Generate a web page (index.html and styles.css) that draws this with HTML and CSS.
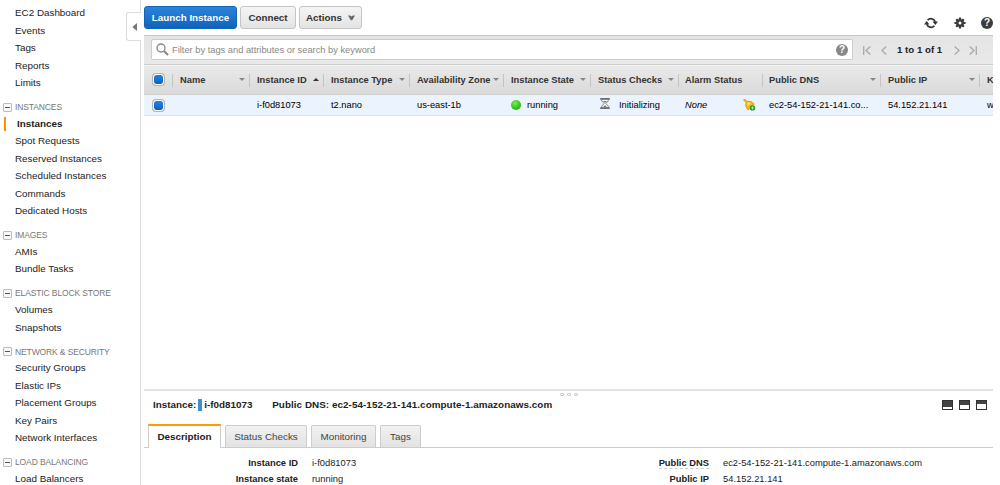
FILE: index.html
```html
<!DOCTYPE html>
<html lang="en">
<head>
<meta charset="utf-8">
<title>EC2 Management Console</title>
<link rel="stylesheet" href="styles.css">
</head>
<body>
<div class="app">
  <nav class="sidebar">
    <ul class="nav-list">
      <li>EC2 Dashboard</li><li>Events</li><li>Tags</li><li>Reports</li><li>Limits</li>
    </ul>
    <h2 class="nav-head"><i class="minus"></i>INSTANCES</h2>
    <ul class="nav-list">
      <li class="current">Instances</li><li>Spot Requests</li><li>Reserved Instances</li><li>Scheduled Instances</li><li>Commands</li><li>Dedicated Hosts</li>
    </ul>
    <h2 class="nav-head"><i class="minus"></i>IMAGES</h2>
    <ul class="nav-list"><li>AMIs</li><li>Bundle Tasks</li></ul>
    <h2 class="nav-head"><i class="minus"></i>ELASTIC BLOCK STORE</h2>
    <ul class="nav-list"><li>Volumes</li><li>Snapshots</li></ul>
    <h2 class="nav-head"><i class="minus"></i>NETWORK &amp; SECURITY</h2>
    <ul class="nav-list"><li>Security Groups</li><li>Elastic IPs</li><li>Placement Groups</li><li>Key Pairs</li><li>Network Interfaces</li></ul>
    <h2 class="nav-head"><i class="minus"></i>LOAD BALANCING</h2>
    <ul class="nav-list"><li>Load Balancers</li></ul>
    <div class="collapse"><svg width="5" height="8" viewBox="0 0 5 8"><path d="M5 0V8L.3 4Z" fill="#777"/></svg></div>
  </nav>
  <main class="main">
    <header class="toolbar">
      <button class="btn primary">Launch Instance</button>
      <button class="btn connect">Connect</button>
      <button class="btn actions">Actions <svg width="7" height="6" viewBox="0 0 7 6"><path d="M0 .5H2L3.5 1.4L5 .5H7L4.2 5.2H2.8Z" fill="#666"/></svg></button>
      <div class="tools">
        <svg width="14" height="12" viewBox="0 0 14 12"><g fill="none" stroke="#333" stroke-width="1.7"><path d="M3.6 3.2A4.6 4.6 0 0 1 11.3 4.8"/><path d="M10.4 8.8A4.6 4.6 0 0 1 2.7 7.2"/></g><path d="M8.6 4.6H14L11.3 8ZM0 7.4H5.4L2.7 4Z" fill="#333"/></svg>
        <svg width="12" height="12" viewBox="-6 -6 12 12"><g stroke="#3c3c3c" stroke-width="2.2"><path d="M0-5.5V5.5M-5.5 0H5.5M-3.8-3.8L3.8 3.8M-3.8 3.8L3.8-3.8"/></g><circle r="4" fill="#3c3c3c"/><circle r="1.5" fill="#fff"/></svg>
        <span class="help dark">?</span>
      </div>
    </header>
    <section class="filter">
      <div class="search">
        <svg width="13" height="13" viewBox="0 0 13 13"><circle cx="5" cy="5" r="4" fill="none" stroke="#888" stroke-width="1.4"/><path d="M8 8L12 12" stroke="#888" stroke-width="2.2"/></svg>
        <span class="hint">Filter by tags and attributes or search by keyword</span>
        <span class="help">?</span>
      </div>
      <div class="pager">
        <svg width="8" height="9" viewBox="0 0 8 9"><path d="M.7 0V9M7.3.5L3 4.5L7.3 8.5"/></svg>
        <svg width="6" height="9" viewBox="0 0 6 9"><path d="M5.3.5L1 4.5L5.3 8.5"/></svg>
        <b>1 to 1 of 1</b>
        <svg width="6" height="9" viewBox="0 0 6 9"><path d="M.7.5L5 4.5L.7 8.5"/></svg>
        <svg width="8" height="9" viewBox="0 0 8 9"><path d="M7.3 0V9M.7.5L5 4.5L.7 8.5"/></svg>
      </div>
    </section>
    <section class="grid head">
      <div class="check"><i class="box"></i></div>
      <div>Name<i class="sort"></i></div>
      <div>Instance ID<i class="sort up"></i></div>
      <div>Instance Type<i class="sort"></i></div>
      <div>Availability Zone<i class="sort"></i></div>
      <div>Instance State<i class="sort"></i></div>
      <div>Status Checks<i class="sort"></i></div>
      <div>Alarm Status</div>
      <div>Public DNS<i class="sort"></i></div>
      <div>Public IP<i class="sort"></i></div>
      <div>K</div>
    </section>
    <section class="grid row">
      <div class="check"><i class="box"></i></div>
      <div></div>
      <div>i-f0d81073</div>
      <div>t2.nano</div>
      <div>us-east-1b</div>
      <div><i class="dot"></i>running</div>
      <div><svg class="glass" width="10" height="11" viewBox="0 0 10 11"><path d="M1.8 1V3L4.2 5.5L1.8 8V10H8.2V8L5.8 5.5L8.2 3V1Z" fill="#fff" stroke="#777" stroke-width=".9"/><path d="M0 .8H10M0 10.2H10" stroke="#555" stroke-width="1.3"/><path d="M3 3H7L5 5ZM2.7 9.5L5 7L7.3 9.5Z" fill="#777"/></svg>Initializing</div>
      <div><em>None</em><svg class="bell" width="13" height="12" viewBox="0 0 13 12"><path d="M.4.8L2 .2L4 2.3Q8.5 1.3 11.3 5.2L5 11Q1.8 7.8 3 3.6Z" fill="#f7b917" stroke="#d98a0a" stroke-width=".7"/><path d="M4 4Q6 2.7 8 4L4.8 7.2Z" fill="#ffdf62"/><circle cx="9.5" cy="8.9" r="2.7" fill="#239728"/><path d="M9.5 7.4V10.4M8 8.9H11" stroke="#bff0b4" stroke-width=".9"/></svg></div>
      <div>ec2-54-152-21-141.co...</div>
      <div>54.152.21.141</div>
      <div>w</div>
    </section>
    <div class="space"></div>
    <section class="details">
      <div class="grip"><i></i><i></i><i></i></div>
      <div class="title">
        <b class="label">Instance:</b><i class="bar"></i><b class="id">i-f0d81073</b><b class="dns">Public DNS: ec2-54-152-21-141.compute-1.amazonaws.com</b>
        <div class="layouts"><i class="full"></i><i class="half"></i><i class="low"></i></div>
      </div>
      <div class="tabs">
        <div class="tab active">Description</div><div class="tab t2">Status Checks</div><div class="tab t3">Monitoring</div><div class="tab t4">Tags</div>
      </div>
      <dl class="facts">
        <dt>Instance ID</dt><dd>i-f0d81073</dd><dt><span class="tip">Public DNS</span></dt><dd>ec2-54-152-21-141.compute-1.amazonaws.com</dd>
        <dt>Instance state</dt><dd>running</dd><dt>Public IP</dt><dd>54.152.21.141</dd>
      </dl>
    </section>
  </main>
</div>
</body>
</html>
```
FILE: styles.css
```css
* { box-sizing: border-box; }
html, body { margin: 0; height: 485px; overflow: hidden; background: #fff; }
body { font: 9.85px/12px "Liberation Sans", Arial, sans-serif; color: #222; }
ul, h2, dl, dd { margin: 0; padding: 0; }
svg, i { display: block; flex: none; }
.app { display: flex; width: 993px; height: 485px; overflow: hidden; }

.sidebar { position: relative; flex: none; width: 141px; height: 485px; padding-top: 4px; border-right: 1px solid #ddd; }
.nav-list { list-style: none; }
.nav-list li { height: 17.5px; padding-left: 15px; line-height: 17.5px; white-space: nowrap; }
.nav-list .current { padding-left: 17px; font-weight: bold; background: linear-gradient(#f90, #f80) 4px 2px / 2px 14px no-repeat; }
.nav-head { display: flex; align-items: center; height: 23.2px; padding: 8px 0 0 3px; font-size: 8.5px; font-weight: normal; letter-spacing: -.12px; color: #777; white-space: nowrap; }
.minus { width: 9px; height: 9px; margin-right: 3px; border: 1px solid #bbb; border-radius: 1px; background: linear-gradient(#555, #555) 50% 50% / 5px 1px no-repeat #f8f8f8; }
.collapse { position: absolute; top: 12px; right: -1px; display: flex; align-items: center; justify-content: center; width: 15px; height: 29px; border: 1px solid #ddd; border-right: 0; border-radius: 3px 0 0 3px; background: #fff; }

.main { display: flex; flex-direction: column; width: 849px; margin-left: 3px; overflow: hidden; }
.toolbar { display: flex; flex: none; height: 35px; padding-top: 6px; }
.btn { display: flex; align-items: center; justify-content: center; height: 23px; margin: 0 3px 0 0; padding: 0; border: 1px solid #c4c4c4; border-radius: 3px; background: linear-gradient(#f5f5f5, #e3e3e3); font: bold 9.8px/12px "Liberation Sans", Arial, sans-serif; color: #333; white-space: nowrap; }
.primary { width: 93px; border-color: #1263b5; background: linear-gradient(#2a84dc, #0f64bd); color: #fff; }
.connect { width: 56px; }
.actions { width: 63px; gap: 6px; }
.tools { display: flex; align-items: center; gap: 15.5px; height: 14px; margin: 10px 0 0 auto; }
.help { display: block; flex: none; width: 12px; height: 12px; border-radius: 50%; background: #888; color: #fff; font: bold 10px/12px "Liberation Sans", Arial, sans-serif; text-align: center; }
.help.dark { background: #3c3c3c; }

.filter { display: flex; flex: none; height: 30px; padding: 4px 0 0 7px; border-top: 1px solid #c6c6c6; border-bottom: 1px solid #ccc; background: linear-gradient(#e4e4e4, #e9e9e9); }
.search { display: flex; align-items: center; flex: none; width: 702px; height: 21px; margin-top: -1px; padding: 0 4px; border: 1px solid #ccc; border-radius: 2px; background: #fff; }
.hint { margin-left: 3px; font-size: 9.3px; color: #888; }
.search .help { margin-left: auto; }
.pager { display: flex; align-items: center; height: 20px; margin-left: 10px; }
.pager path { fill: none; stroke: #aaa; stroke-width: 1.3; }
.pager b { margin: 0 11px 0 10px; width: 46px; font-size: 9.7px; white-space: nowrap; }
.pager svg:nth-child(2) { margin-left: 10px; }
.pager svg:last-child { margin-left: 9px; }

.grid { display: grid; flex: none; grid-template-columns: 28px 77px 74px 86px 94px 87px 88px 84px 118px 99px 40px; font-size: 9.3px; }
.grid > div { position: relative; display: flex; align-items: center; padding-left: 8px; white-space: nowrap; }
.grid > .check { padding-left: 9px; }
.head { height: 30px; border-top: 1px solid #f5f5f5; border-bottom: 1px solid #d0d0d0; background: linear-gradient(#eaeaea, #d9d9d9); font-weight: bold; color: #333; }
.head > div { padding-bottom: 1px; }
.head > div + div::before { content: ""; position: absolute; left: 0; top: 8px; width: 1px; height: 13px; background: #c4c4c4; }
.grid > div:nth-child(8), .grid > div:nth-child(9) { padding-left: 7px; }
.box { width: 11px; height: 11px; border: 1px solid #fff; border-radius: 3px; background: linear-gradient(#2581db, #0d63bd) padding-box #fff; box-shadow: 0 0 0 1px #b4b4b4; }
.sort { margin: 0 4px 0 auto; border: solid transparent; border-width: 3px 3px 0; border-top-color: #888; }
.sort.up { border-width: 0 3px 3px; border-bottom-color: #333; }
.row { height: 21px; border-bottom: 1px solid #d8e1e9; background: #eaf3fe; color: #000; }
.dot { width: 10px; height: 10px; margin-right: 6px; border-radius: 50%; background: radial-gradient(circle at 40% 30%, #78ec58, #34c51d 55%, #169b08); }
.glass { margin: -3px 9px 0 2px; }
.bell { margin-left: auto; margin-right: 6px; }
.space { flex: none; height: 273px; }

.details { position: relative; flex: none; height: 98px; border-top: 2px solid #e3e3e3; }
.grip { position: absolute; top: 2px; left: 416px; display: flex; gap: 3px; }
.grip i { width: 4px; height: 3px; border: 1px solid #ccc; border-radius: 1px; }
.title { display: flex; align-items: center; height: 33px; padding: 0 6px 5px 9px; white-space: nowrap; }
.bar { width: 4px; height: 12px; margin: 0 2px; background: #3f8fd8; }
.id { width: 68px; }
.dns { letter-spacing: .06px; }
.layouts { display: flex; gap: 6px; margin-left: auto; }
.layouts i { width: 11px; height: 10px; border: 1px solid #333; background: linear-gradient(#444, #444) 0 0 / 100% 3px no-repeat #fff; }
.layouts .full { background-size: 100% 6px; }
.layouts .half { background-size: 100% 4px; }
.tabs { display: flex; align-items: flex-end; height: 24px; padding-left: 4px; border-bottom: 1px solid #ccc; }
.tab { display: flex; align-items: center; justify-content: center; height: 22px; margin-right: 4px; border: 1px solid #ccc; border-bottom: 0; border-radius: 2px 2px 0 0; background: linear-gradient(#f2f2f2, #e2e2e2); color: #444; }
.tab.active { width: 73px; height: 24px; margin-bottom: -1px; border-top: 2px solid #f90; border-radius: 0; background: #fff; font-weight: bold; color: #222; }
.t2 { width: 82px; } .t3 { width: 65px; } .t4 { width: 41px; }
.facts { display: grid; grid-template-columns: 154px 257px 154px 1fr; grid-auto-rows: 16.4px; padding-top: 7px; font-size: 9.35px; white-space: nowrap; }
.facts dt { font-weight: bold; text-align: right; line-height: 16px; }
.facts dd { padding-left: 14px; line-height: 16px; }
.tip { border-bottom: 1px dashed #ccc; }
```
